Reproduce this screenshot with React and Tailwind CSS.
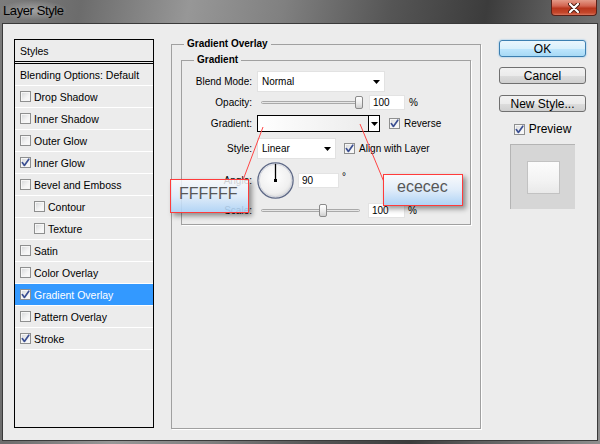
import React from "react";

function Check({ checked }) {
  return (
    <span className="w-[11px] h-[11px] shrink-0 border border-[#8e8f8f] bg-[linear-gradient(135deg,#d4d6d8_0%,#f4f4f4_60%,#fbfbfb_100%)] shadow-[inset_0_0_0_1px_#f6f6f6] flex items-center justify-center">
      {checked && (
        <svg width="9" height="9" viewBox="0 0 9 9">
          <path d="M1.3 4.6 L3.4 7.4 L7.8 1.2" fill="none" stroke="#3b4f92" strokeWidth="1.7" strokeLinecap="round" strokeLinejoin="round" />
        </svg>
      )}
    </span>
  );
}

function Arrow() {
  return (
    <svg width="7" height="4" viewBox="0 0 7 4" className="shrink-0">
      <path d="M0 0H7L3.5 4Z" fill="#000" />
    </svg>
  );
}

function Row({ label, checked, indent, active }) {
  return (
    <div
      className={
        "h-[22px] border-b border-white flex items-center gap-[3px] " +
        (indent ? "pl-[19px] " : "pl-[5px] ") +
        (active ? "bg-[#3399ff] text-white" : "text-black")
      }
    >
      <Check checked={checked} />
      <span className="leading-[12px]">{label}</span>
    </div>
  );
}

function Thumb({ left }) {
  return (
    <span
      className="absolute top-[1px] w-[8px] h-[13px] rounded-[2px] border border-[#8a8a8a] bg-[linear-gradient(180deg,#ffffff_0%,#ececec_55%,#cfcfcf_100%)]"
      style={{ left }}
    />
  );
}

function Slider({ width, thumb, ml }) {
  return (
    <div className={"relative h-[15px] shrink-0 " + ml} style={{ width }}>
      <div className="absolute left-0 right-0 top-[6px] h-[3px] rounded-full border border-[#a9a9a9] bg-[#e6e6e6]" />
      <Thumb left={thumb} />
    </div>
  );
}

function Field({ value, w, ml }) {
  return (
    <div className={"h-[15px] bg-white border border-[#e3e3e3] flex items-center pl-[3px] shrink-0 " + w + " " + ml}>
      <span className="leading-[12px]">{value}</span>
    </div>
  );
}

const rows = [
  ["Drop Shadow", false],
  ["Inner Shadow", false],
  ["Outer Glow", false],
  ["Inner Glow", true],
  ["Bevel and Emboss", false],
  ["Contour", false, true],
  ["Texture", false, true],
  ["Satin", false],
  ["Color Overlay", false],
  ["Gradient Overlay", true, false, true],
  ["Pattern Overlay", false],
  ["Stroke", true],
];

export default function App() {
  return (
    <div className="relative w-[600px] h-[444px] overflow-hidden flex flex-col font-['Liberation_Sans',Arial,sans-serif] bg-[linear-gradient(100deg,#7c7c7c_0%,#6c6c6c_12%,#979797_28%,#808080_42%,#555555_58%,#3c3c3c_72%,#5e5e5e_82%,#8e8e8e_100%)]">
      {/* Title bar */}
      <div className="h-[23px] shrink-0 flex items-start justify-between">
        <div className="ml-[1px] mt-[1px] px-[2px] h-[19px] flex items-center rounded-[6px] bg-[radial-gradient(ellipse_at_center,rgba(200,200,200,0.55)_0%,rgba(200,200,200,0)_75%)]">
          <span className="text-[13px] leading-[15px] tracking-[-0.4px] text-black">Layer Style</span>
        </div>
        <div className="mr-[3px] w-[46px] h-[16px] rounded-b-[4px] border border-t-0 border-[#5a2118] bg-[linear-gradient(180deg,#e49a88_0%,#d26450_40%,#b8361d_55%,#c4472b_85%,#d9735c_100%)] flex items-center justify-center">
          <svg width="12" height="10" viewBox="0 0 12 10">
            <path d="M2 1 L10 9 M10 1 L2 9" stroke="#4a1a10" strokeWidth="4" strokeLinecap="round" />
            <path d="M2 1 L10 9 M10 1 L2 9" stroke="#ffffff" strokeWidth="2.2" strokeLinecap="round" />
          </svg>
        </div>
      </div>

      {/* Body */}
      <div className="mx-[2px] mb-[3px] flex-1 border border-[#3a3a3a] bg-[#ececec] flex items-start pl-[11px] pt-[15px]">
        {/* Styles list */}
        <div className="w-[140px] h-[389px] shrink-0 border border-black bg-[#ececec] text-[10.5px]">
          <div className="h-[24px] border-b-[3px] border-double border-black flex items-center pl-[5px]">
            <span className="leading-[12px]">Styles</span>
          </div>
          <div className="h-[22px] border-b border-white flex items-center pl-[5px]">
            <span className="leading-[12px]">Blending Options: Default</span>
          </div>
          {rows.map(([l, c, i, a]) => (
            <Row key={l} label={l} checked={c} indent={i} active={a} />
          ))}
        </div>

        {/* Gradient Overlay group */}
        <fieldset className="ml-[17px] -mt-[1px] w-[310px] h-[391px] shrink-0 border border-[#a0a0a0] shadow-[1px_1px_0_#ffffff] px-[9px] text-[10px] text-black">
          <legend className="ml-[3px] px-[3px] font-bold leading-[12px]">Gradient Overlay</legend>
          <fieldset className="mt-[4px] w-[290px] h-[171px] border border-[#a0a0a0] shadow-[1px_1px_0_#ffffff]">
            <legend className="ml-[12px] px-[3px] font-bold leading-[12px]">Gradient</legend>

            {/* Blend mode */}
            <div className="mt-[5px] h-[21px] flex items-center">
              <span className="w-[70px] text-right shrink-0">Blend Mode:</span>
              <div className="ml-[5px] w-[128px] h-[21px] bg-white border border-[#e2e2e2] flex items-center justify-between pl-[4px] pr-[4px]">
                <span>Normal</span>
                <Arrow />
              </div>
            </div>

            {/* Opacity */}
            <div className="mt-[3px] h-[15px] flex items-center">
              <span className="w-[70px] text-right shrink-0">Opacity:</span>
              <Slider width="102px" thumb="94px" ml="ml-[9px]" />
              <Field value="100" w="w-[36px]" ml="ml-[6px]" />
              <span className="ml-[4px]">%</span>
            </div>

            {/* Gradient */}
            <div className="mt-[5px] h-[17px] flex items-center">
              <span className="w-[70px] text-right shrink-0">Gradient:</span>
              <div className="ml-[5px] w-[123px] h-[17px] border border-black flex shrink-0">
                <div className="flex-1 bg-[linear-gradient(90deg,#ffffff_0%,#f7f7f7_40%,#ececec_100%)]" />
                <div className="w-[11px] border-l border-black bg-white flex items-center justify-center">
                  <Arrow />
                </div>
              </div>
              <span className="ml-[9px]"><Check checked /></span>
              <span className="ml-[4px]">Reverse</span>
            </div>

            {/* Style */}
            <div className="mt-[6px] h-[21px] flex items-center">
              <span className="w-[70px] text-right shrink-0">Style:</span>
              <div className="ml-[5px] w-[79px] h-[21px] bg-white border border-[#e2e2e2] flex items-center justify-between pl-[4px] pr-[4px] shrink-0">
                <span>Linear</span>
                <Arrow />
              </div>
              <span className="ml-[8px]"><Check checked /></span>
              <span className="ml-[4px]">Align with Layer</span>
            </div>

            {/* Angle */}
            <div className="mt-[3px] h-[37px] flex items-center">
              <span className="w-[70px] text-right shrink-0">Angle:</span>
              <svg width="37" height="37" viewBox="0 0 37 37" className="ml-[5px] shrink-0">
                <defs>
                  <radialGradient id="dialg" cx="45%" cy="40%" r="65%">
                    <stop offset="0" stopColor="#ffffff" />
                    <stop offset="0.7" stopColor="#f0f0f0" />
                    <stop offset="1" stopColor="#d6d6d6" />
                  </radialGradient>
                </defs>
                <circle cx="18.5" cy="18.5" r="17.6" fill="url(#dialg)" stroke="#5d6886" strokeWidth="1.3" />
                <circle cx="18.5" cy="18.5" r="16.3" fill="none" stroke="#c9cdd8" strokeWidth="0.8" />
                <line x1="18.5" y1="18.5" x2="18.5" y2="1.8" stroke="#000" strokeWidth="1.3" />
                <rect x="17" y="17" width="3" height="3" fill="#000" />
              </svg>
              <Field value="90" w="w-[41px]" ml="ml-[4px]" />
              <span className="ml-[3px] self-start mt-[9px] leading-[12px]">°</span>
            </div>

            {/* Scale */}
            <div className="mt-[4px] h-[15px] flex items-center">
              <span className="w-[70px] text-right shrink-0">Scale:</span>
              <Slider width="99px" thumb="58px" ml="ml-[9px]" />
              <Field value="100" w="w-[37px]" ml="ml-[8px]" />
              <span className="ml-[3px]">%</span>
            </div>
          </fieldset>
        </fieldset>

        {/* Buttons column */}
        <div className="ml-[18px] w-[87px] shrink-0 flex flex-col items-center text-[12px] text-black">
          <button className="mt-[1px] w-[87px] h-[17px] rounded-[3px] border border-[#3c7fb1] bg-[linear-gradient(180deg,#eaf6fd_0%,#d9f0fc_50%,#bee6fd_51%,#a7d9f5_100%)] shadow-[0_0_2px_#6fb6e8] leading-[14px]">
            OK
          </button>
          <button className="mt-[10px] w-[87px] h-[17px] rounded-[3px] border border-[#707070] bg-[linear-gradient(180deg,#f2f2f2_0%,#ebebeb_50%,#dddddd_51%,#cfcfcf_100%)] leading-[14px]">
            Cancel
          </button>
          <button className="mt-[11px] w-[87px] h-[17px] rounded-[3px] border border-[#707070] bg-[linear-gradient(180deg,#f2f2f2_0%,#ebebeb_50%,#dddddd_51%,#cfcfcf_100%)] leading-[14px]">
            New Style...
          </button>
          <div className="mt-[10px] flex items-center gap-[4px]">
            <Check checked />
            <span className="leading-[14px]">Preview</span>
          </div>
          <div className="mt-[8px] w-[65px] h-[65px] bg-[#d6d6d6] border-t border-l border-[#b4b4b4] flex items-center justify-center">
            <div className="w-[33px] h-[33px] border border-[#c2c2c2] bg-[linear-gradient(180deg,#fcfcfc_0%,#f3f3f3_60%,#e9e9e9_100%)]" />
          </div>
        </div>
      </div>

      {/* Callout leader lines */}
      <svg className="absolute inset-0 pointer-events-none" width="600" height="444">
        <line x1="263" y1="127" x2="243" y2="180" stroke="#ff4545" strokeWidth="1" />
        <line x1="360" y1="124" x2="384" y2="182" stroke="#ff4545" strokeWidth="1" />
      </svg>

      {/* Callouts */}
      <div className="absolute left-[170px] top-[179px] w-[79px] h-[34px] border border-[#ff3b3b] bg-[linear-gradient(180deg,rgba(250,251,253,0.82)_0%,rgba(222,236,251,0.85)_50%,rgba(172,210,246,0.9)_100%)] shadow-[3px_3px_5px_rgba(0,0,0,0.4)] pl-[8px] pt-[2px]">
        <span className="text-[16px] leading-[18px] text-[#575757]">FFFFFF</span>
      </div>
      <div className="absolute left-[383px] top-[174px] w-[80px] h-[32px] border border-[#ff3b3b] bg-[linear-gradient(180deg,rgba(250,251,253,0.9)_0%,rgba(222,236,251,0.9)_50%,rgba(172,210,246,0.95)_100%)] shadow-[3px_3px_5px_rgba(0,0,0,0.4)] pl-[13px]">
        <span className="text-[16px] leading-[18px] text-[#575757]">ececec</span>
      </div>
    </div>
  );
}
